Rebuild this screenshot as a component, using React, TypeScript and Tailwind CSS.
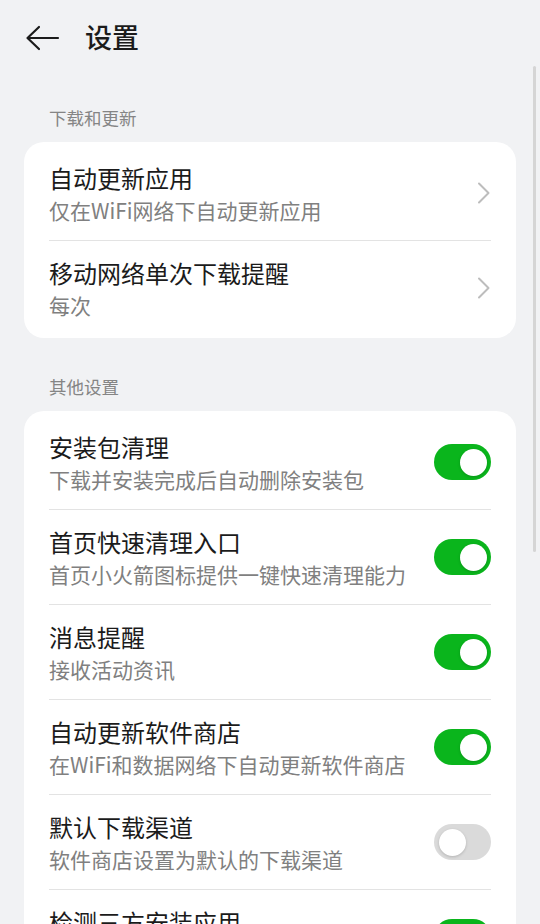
import React from 'react';

type Item = {
  title: string;
  sub: string;
  kind: 'link' | 'on' | 'off';
};

const downloadItems: Item[] = [
  { title: '自动更新应用', sub: '仅在WiFi网络下自动更新应用', kind: 'link' },
  { title: '移动网络单次下载提醒', sub: '每次', kind: 'link' },
];

const otherItems: Item[] = [
  { title: '安装包清理', sub: '下载并安装完成后自动删除安装包', kind: 'on' },
  { title: '首页快速清理入口', sub: '首页小火箭图标提供一键快速清理能力', kind: 'on' },
  { title: '消息提醒', sub: '接收活动资讯', kind: 'on' },
  { title: '自动更新软件商店', sub: '在WiFi和数据网络下自动更新软件商店', kind: 'on' },
  { title: '默认下载渠道', sub: '软件商店设置为默认的下载渠道', kind: 'off' },
  { title: '检测三方安装应用', sub: '安装第三方来源应用时进行安全检测', kind: 'on' },
];

function Toggle({ on }: { on: boolean }) {
  return (
    <div
      className={
        on
          ? 'flex h-[36px] w-[57px] shrink-0 items-center justify-end rounded-full bg-[#0ab51c] px-[4.5px]'
          : 'flex h-[36px] w-[57px] shrink-0 items-center justify-start rounded-full bg-[#dadada] px-[4.5px]'
      }
    >
      <div className="h-[27px] w-[27px] rounded-full bg-white shadow-[0_1px_3px_rgba(0,0,0,0.18)]" />
    </div>
  );
}

function Chevron() {
  return (
    <svg width="14" height="22" viewBox="0 0 14 22" className="shrink-0">
      <path d="M2 1.5 L11.5 11 L2 20.5" fill="none" stroke="#bdbdbd" strokeWidth="2" strokeLinecap="round" strokeLinejoin="round" />
    </svg>
  );
}

function Row({ item, last }: { item: Item; last: boolean }) {
  return (
    <div className="px-[25px]">
      <div className={last ? 'flex items-center gap-4 py-[15px]' : 'flex items-center gap-4 border-b border-[#e3e3e3] py-[15px]'}>
        <div className="min-w-0 flex-1">
          <div className="text-[24px] leading-[34px] text-[#1b1b1b]">{item.title}</div>
          <div className="whitespace-nowrap text-[21px] leading-[30px] text-[#808080]">{item.sub}</div>
        </div>
        {item.kind === 'link' ? <Chevron /> : <Toggle on={item.kind === 'on'} />}
      </div>
    </div>
  );
}

function Section({ label, items, first }: { label: string; items: Item[]; first?: boolean }) {
  return (
    <section>
      <div className={first ? 'px-[49px] pt-[28px] pb-[12px] text-[17.5px] leading-[24px] text-[#858585]' : 'px-[49px] pt-[37px] pb-[12px] text-[17.5px] leading-[24px] text-[#858585]'}>
        {label}
      </div>
      <div className="mx-[24px] rounded-[20px] bg-white pt-[4px] pb-[3px]">
        {items.map((it, i) => (
          <Row key={it.title} item={it} last={i === items.length - 1} />
        ))}
      </div>
    </section>
  );
}

export default function App() {
  return (
    <div
      className="relative h-[924px] w-[540px] overflow-hidden bg-[#f1f2f4]"
      style={{ fontFamily: '"Noto Sans CJK SC", "Noto Sans", sans-serif' }}
    >
      <header className="flex h-[78px] items-center gap-[25px] pl-[25px] pb-[2px]">
        <svg width="35" height="26" viewBox="0 0 35 26">
          <path d="M33 13 H3 M14 2 L2.5 13 L14 24" fill="none" stroke="#1b1b1b" strokeWidth="2.2" strokeLinecap="round" strokeLinejoin="round" />
        </svg>
        <h1 className="text-[27px] font-medium leading-none text-[#1b1b1b] -mt-[3px]">设置</h1>
      </header>

      <Section label="下载和更新" items={downloadItems} first />
      <Section label="其他设置" items={otherItems} />

      <div className="absolute right-[4px] top-[66px] h-[486px] w-[3px] rounded-full bg-[#d5d5d5]" />
    </div>
  );
}
